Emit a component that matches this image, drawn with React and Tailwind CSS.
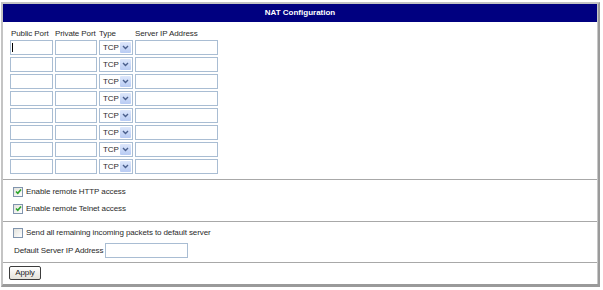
const rows = [0, 1, 2, 3, 4, 5, 6, 7];

function TextBox({ w, caret }) {
  return (
    <div className={`relative h-[15px] shrink-0 border border-[#a9bdd3] bg-white ${w}`}>
      {caret && <span className="absolute left-[1px] top-[2px] h-[9px] w-px bg-black" />}
    </div>
  );
}

function TypeSelect() {
  return (
    <div className="flex h-[15px] w-[34px] shrink-0 items-center justify-between border border-[#a9bdd3] bg-white pl-[3px] pr-px">
      <span className="leading-none">TCP</span>
      <span className="flex h-[11px] w-[11px] items-center justify-center rounded-[1px] bg-gradient-to-b from-[#dde7fb] to-[#b8cbf3]">
        <svg width="7" height="5" viewBox="0 0 7 5">
          <path d="M1 1l2.5 2.5L6 1" stroke="#4a5f8c" strokeWidth="1.4" fill="none" />
        </svg>
      </span>
    </div>
  );
}

function Check({ checked }) {
  return (
    <span className="flex h-[10px] w-[10px] shrink-0 items-center justify-center border border-[#8094ad] bg-gradient-to-br from-[#e2e2dc] to-white">
      {checked && (
        <svg width="7" height="7" viewBox="0 0 7 7">
          <path d="M1 3.5l1.8 1.8L6 1.5" stroke="#2aa52a" strokeWidth="1.6" fill="none" />
        </svg>
      )}
    </span>
  );
}

export default function App() {
  return (
    <div className="h-[290px] w-[603px] bg-white pl-[1px] pt-[2px] font-['Liberation_Sans',Arial,sans-serif] text-[8px] tracking-[-0.1px] text-[#2a2a2a]">
      <div className="flex h-[285px] w-[599px] flex-col border-l-2 border-t-2 border-r-2 border-b-[3px] border-l-[#c4c4c4] border-t-[#c4c4c4] border-r-[#9a9a9a] border-b-[#9a9a9a]">
        <div className="flex flex-1 flex-col border-r border-[#c8c8c8]">
          {/* header */}
          <div className="flex h-[18px] items-center justify-center bg-[#000080] text-[8px] font-bold tracking-[0px] text-white">
            NAT Configuration
          </div>

          {/* port rows */}
          <div className="h-[158px] border-b border-[#a8a8a8] pl-[7px] pt-[6px]">
            <div className="flex h-[11px] items-center leading-none">
              <span className="w-[45px] pl-px">Public Port</span>
              <span className="w-[44px]">Private Port</span>
              <span className="w-[36px]">Type</span>
              <span>Server IP Address</span>
            </div>
            <div className="mt-px flex flex-col gap-[2px]">
              {rows.map(i => (
                <div key={i} className="flex gap-[2px]">
                  <TextBox w="w-[43px]" caret={i === 0} />
                  <TextBox w="w-[42px]" />
                  <TypeSelect />
                  <TextBox w="w-[83px]" />
                </div>
              ))}
            </div>
          </div>

          {/* remote access */}
          <div className="flex h-[42px] flex-col gap-[4px] border-b border-[#a8a8a8] pl-[10px] pt-[5px]">
            <label className="flex h-[13px] items-center gap-[3px]">
              <Check checked />
              <span>Enable remote HTTP access</span>
            </label>
            <label className="flex h-[13px] items-center gap-[3px]">
              <Check checked />
              <span>Enable remote Telnet access</span>
            </label>
          </div>

          {/* default server */}
          <div className="flex h-[41px] flex-col border-b border-[#a8a8a8] pl-[8px] pt-[4px]">
            <label className="flex h-[13px] items-center gap-[3px] pl-[2px]">
              <Check />
              <span>Send all remaining incoming packets to default server</span>
            </label>
            <div className="mt-[4px] flex h-[15px] items-center gap-[2px]">
              <span className="pl-[3px]">Default Server IP Address</span>
              <TextBox w="w-[83px]" />
            </div>
          </div>

          {/* apply */}
          <div className="h-[20px] pl-[6px] pt-[3px]">
            <button className="flex h-[14px] w-[32px] items-center justify-center rounded-[2px] border border-[#3c3c3c] bg-gradient-to-b from-white to-[#e4e2da] text-[8px] leading-none text-[#222]">
              Apply
            </button>
          </div>
        </div>
      </div>
    </div>
  );
}
